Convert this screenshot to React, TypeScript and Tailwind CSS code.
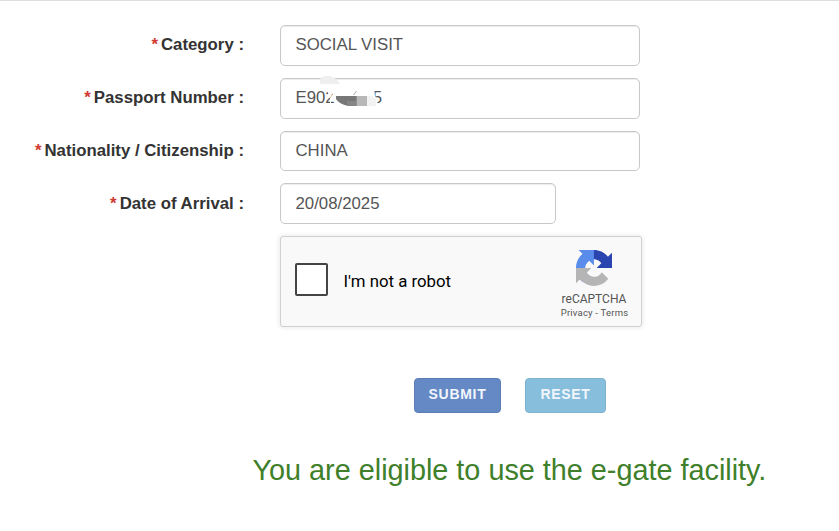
import type { ReactNode } from "react";

const RecaptchaLogo = () => (
  <svg viewBox="0 0 64 64" className="w-9 h-9" aria-hidden="true">
    <path
      fill="#2b45b0"
      d="M64 31.955l-.033-1.37V4.687l-7.16 7.16C50.948 4.674 42.033.093 32.05.093c-10.4 0-19.622 4.96-25.458 12.64l11.736 11.86a15.55 15.55 0 0 1 4.754-5.334c2.05-1.6 4.952-2.906 8.968-2.906.485 0 .86.057 1.135.163 4.976.393 9.288 3.14 11.828 7.124l-8.307 8.307L64 31.953"
    />
    <path
      fill="#5a8cec"
      d="M31.862.094l-1.37.033H4.594l7.16 7.16C4.58 13.147 0 22.06 0 32.046c0 10.4 4.96 19.622 12.64 25.458L24.5 45.768a15.55 15.55 0 0 1-5.334-4.754c-1.6-2.05-2.906-4.952-2.906-8.968 0-.485.057-.86.163-1.135.393-4.976 3.14-9.288 7.124-11.828l8.307 8.307L31.86.095"
    />
    <path
      fill="#b5b5b5"
      d="M.001 32.045l.033 1.37v25.898l7.16-7.16c5.86 7.173 14.774 11.754 24.76 11.754 10.4 0 19.622-4.96 25.458-12.64l-11.736-11.86a15.55 15.55 0 0 1-4.754 5.334c-2.05 1.6-4.952 2.906-8.968 2.906-.485 0-.86-.057-1.135-.163-4.976-.393-9.288-3.14-11.828-7.124l8.307-8.307c-10.522.04-22.4.066-27.295-.005"
    />
  </svg>
);

// covers the middle digits of the passport number
const Smudge = () => (
  <svg viewBox="0 0 64 34" className="absolute left-[38px] -top-[3px] w-16 h-[34px]" aria-hidden="true">
    <path fill="#fff" d="M6 12h11l2 8-7 5v3h-1v-6l3-4-5-1z" />
    <path fill="#fff" d="M48 12h7l1 8 3 5-2 5h-9z" />
    <path fill="#efefef" d="M1 8V3q4-4 10-3 7 2 10 8z" />
    <path fill="#777" d="M17 20h20v10h-8q-9-2-12-7z" />
    <path fill="#858585" d="M28 25h9v5h-9z" />
    <path fill="#8f8f8f" d="M37 20h11v10H37z" />
    <path fill="#b8b8b8" d="M38 20h10v10H38z" />
    <path fill="#f2f2f2" d="M48 20h5l4 3v7H48z" />
    <path stroke="#aaa" strokeWidth="1" d="M34.500 19l3-4" />
  </svg>
);

type FieldProps = {
  label: string;
  className: string;
  labelClassName?: string;
  children: ReactNode;
};

const Field = ({ label, className, labelClassName = "pt-[10px]", children }: FieldProps) => (
  <div className="flex">
    <p
      className={`w-[244px] mr-9 text-right text-[16.8px] leading-5 font-bold text-[#333] whitespace-nowrap ${labelClassName}`}
    >
      <span className="mr-[3px] text-[#d03a32]">*</span>
      {label} :
    </p>
    <div
      className={`relative pl-[14.500px] border border-[#c8c8c8] rounded-[5px] shadow-[inset_0_1px_1px_rgba(0,0,0,0.075)] text-[16.8px] leading-5 text-[#555] ${className}`}
    >
      {children}
    </div>
  </div>
);

const App = () => {
  return (
    <main className="h-[531px] overflow-hidden bg-white border-t border-[#dedede] pt-6 font-['Liberation_Sans',Arial,sans-serif]">
      <div className="flex flex-col gap-3">
        <Field label="Category" className="w-[360px] h-[41px] pt-[9px]">
          SOCIAL VISIT
        </Field>
        <Field label="Passport Number" className="w-[360px] h-[41px] pt-[9px]">
          E902<span className="ml-[38px]">5</span>
          <Smudge />
        </Field>
        <Field label="Nationality / Citizenship" className="w-[360px] h-10 pt-[9px]">
          CHINA
        </Field>
        <Field label="Date of Arrival" className="w-[276px] h-[41px] pt-[10px]" labelClassName="pt-[11px]">
          20/08/2025
        </Field>
      </div>

      <div className="mt-3 ml-[280px] flex items-start w-[362px] h-[91px] pl-[14px] bg-[#f9f9f9] border border-[#d0d0d0] rounded-[3px] shadow-[0_0_4px_1px_rgba(0,0,0,0.08)] font-[Roboto,sans-serif]">
        <div className="mt-[26px] w-[33px] h-[33px] bg-white border-2 border-[#444] rounded-[2px]"></div>
        <p className="mt-[34px] ml-[15.500px] text-[16.800px] leading-5 text-black">I'm not a robot</p>
        <div className="ml-auto mr-[9px] pt-[13px] flex flex-col items-center w-[76px] text-[#555] whitespace-nowrap">
          <RecaptchaLogo />
          <p className="mt-[6px] text-[12px] leading-[14px]">reCAPTCHA</p>
          <p className="pl-px text-[9.500px] leading-[14px] tracking-[0.2px]">Privacy - Terms</p>
        </div>
      </div>

      <div className="mt-[51px] ml-[414px] flex gap-6 text-sm font-bold tracking-[0.7px] text-[#f2f6fc]">
        <button className="w-[87px] h-[35px] pb-[3px] bg-[#6589c4] border border-[#5b7db6] rounded-[4px]">SUBMIT</button>
        <button className="w-[81px] h-[35px] pb-[3px] bg-[#87bedb] border border-[#7cb3d0] rounded-[4px]">RESET</button>
      </div>

      <p className="mt-10 ml-[252.500px] text-[28.800px] leading-[34px] text-[#40802a] whitespace-nowrap">
        You are eligible to use the e-gate facility.
      </p>
    </main>
  );
};

export default App;
